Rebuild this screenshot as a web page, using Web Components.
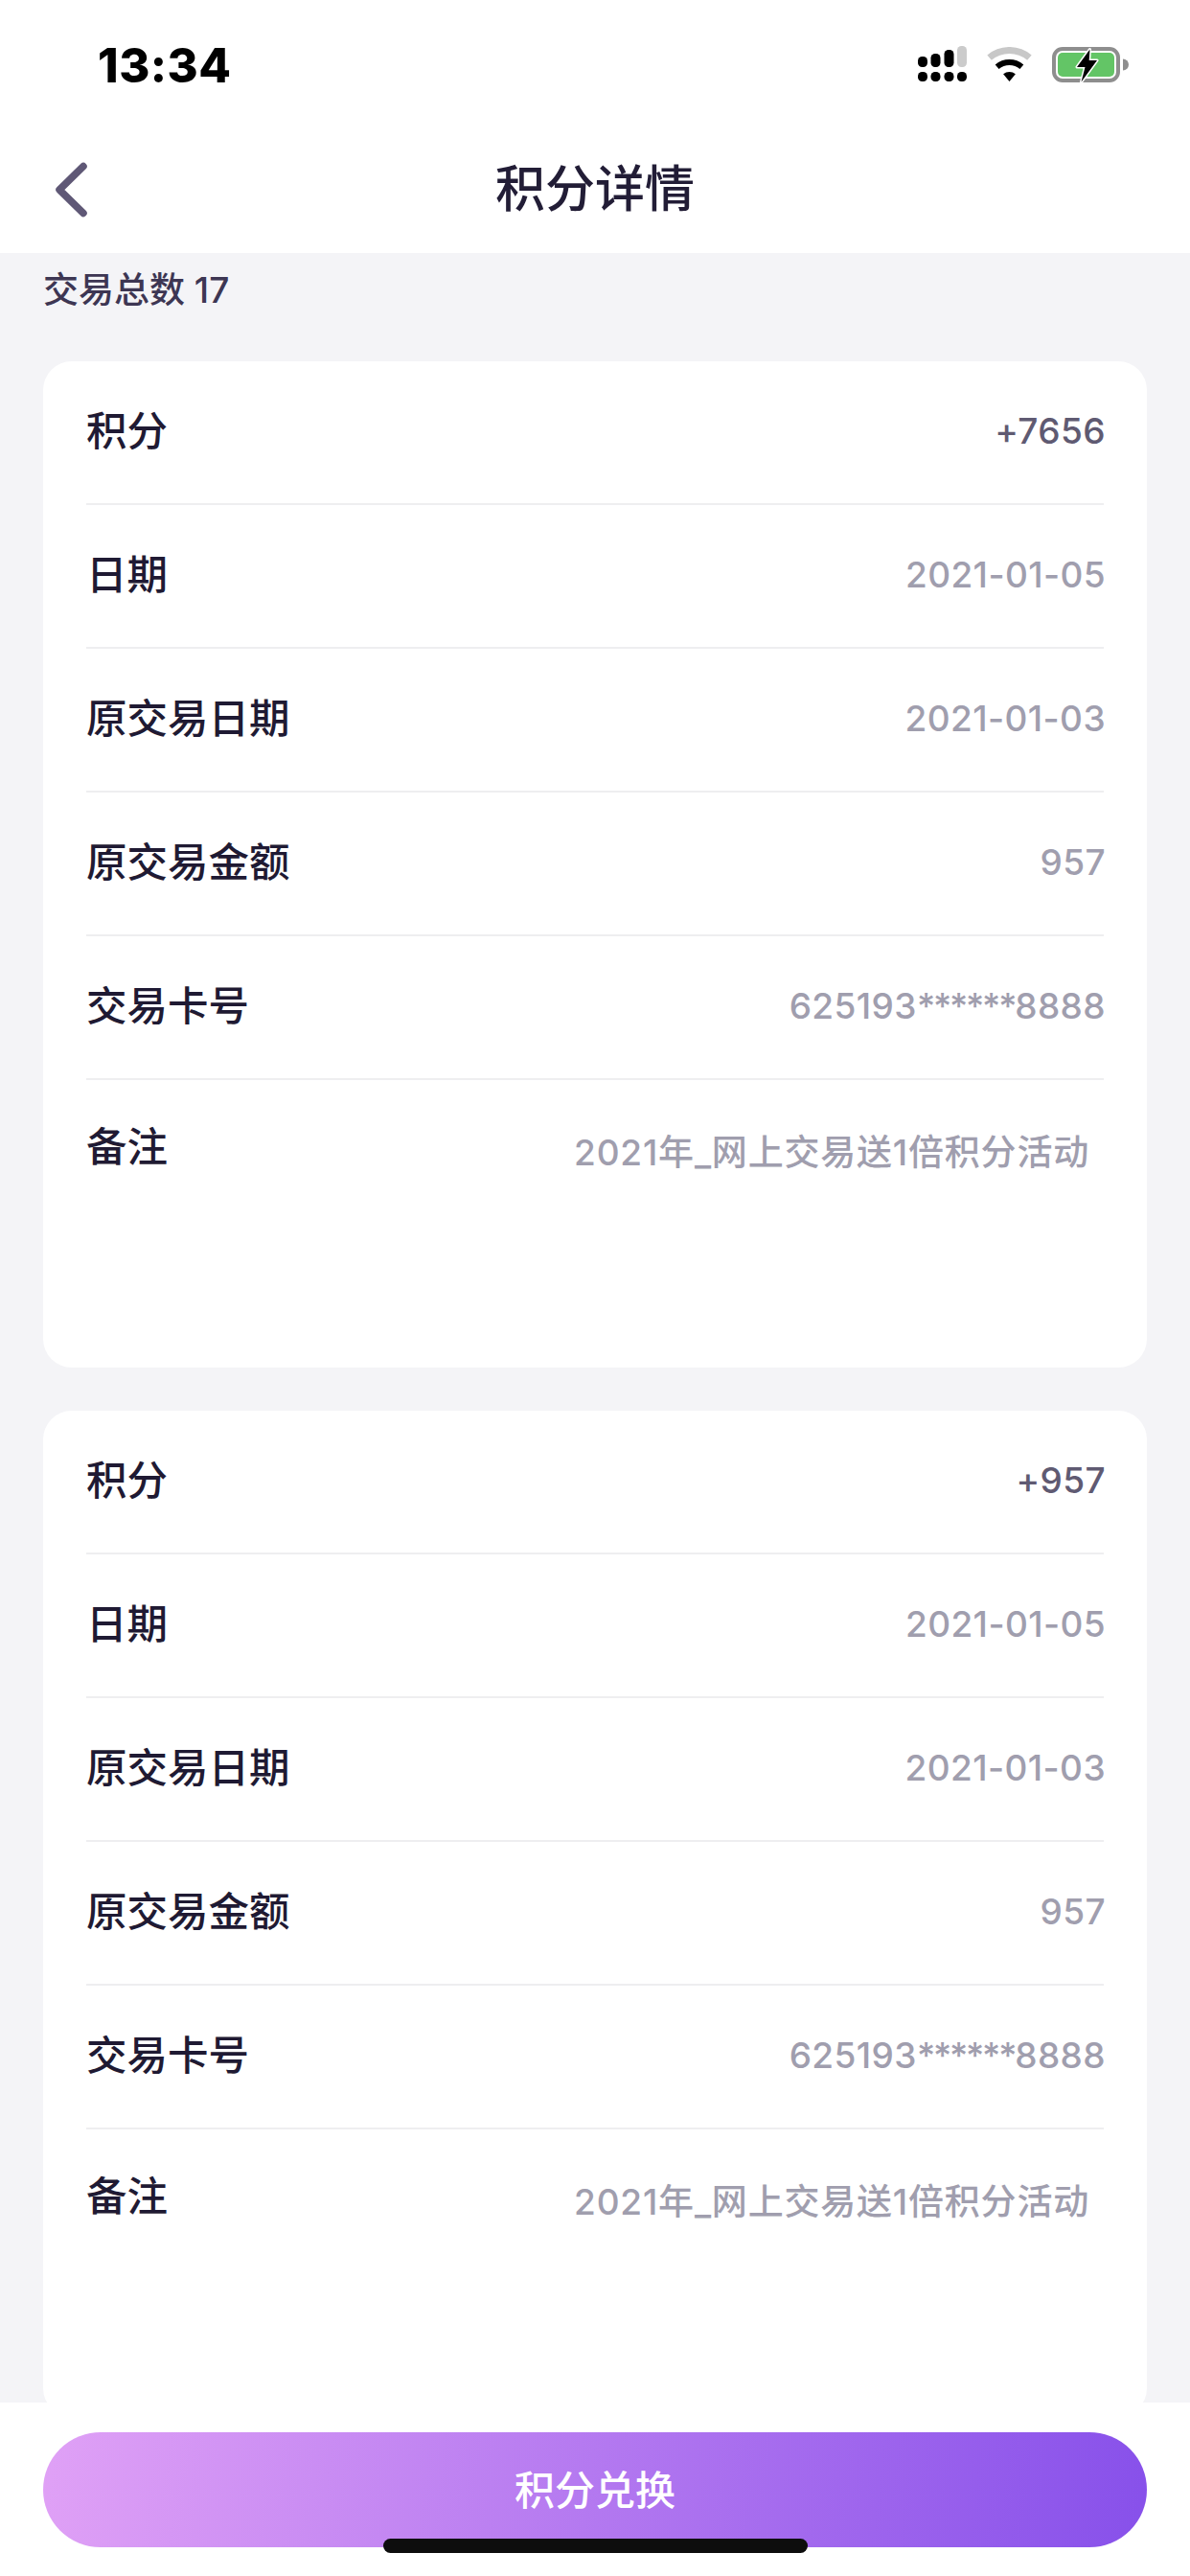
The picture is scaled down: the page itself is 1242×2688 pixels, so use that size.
<!DOCTYPE html>
<html lang="zh">
<head>
<meta charset="utf-8">
<title>积分详情</title>
<style>
    html, body {
        margin: 0;
        padding: 0;
        background: #f4f4f7;
    }
    body {
        font-family: Inter, 'Noto Sans CJK SC', sans-serif;
    }
</style>
</head>
<body>
<x-points-page>
    <x-status-bar slot="top" time="13:34"></x-status-bar>
    <x-nav-bar slot="top" title="积分详情"></x-nav-bar>

    <x-total-line>交易总数 17</x-total-line>

    <x-detail-card>
        <x-detail-row label="积分" value="+7656" strong></x-detail-row>
        <x-detail-row label="日期" value="2021-01-05"></x-detail-row>
        <x-detail-row label="原交易日期" value="2021-01-03"></x-detail-row>
        <x-detail-row label="原交易金额" value="957"></x-detail-row>
        <x-detail-row label="交易卡号" value="625193<i>******</i>8888"></x-detail-row>
        <x-detail-row label="备注" value="2021年_网上交易送1倍积分活动" note></x-detail-row>
    </x-detail-card>

    <x-detail-card>
        <x-detail-row label="积分" value="+957" strong></x-detail-row>
        <x-detail-row label="日期" value="2021-01-05"></x-detail-row>
        <x-detail-row label="原交易日期" value="2021-01-03"></x-detail-row>
        <x-detail-row label="原交易金额" value="957"></x-detail-row>
        <x-detail-row label="交易卡号" value="625193<i>******</i>8888"></x-detail-row>
        <x-detail-row label="备注" value="2021年_网上交易送1倍积分活动" note></x-detail-row>
    </x-detail-card>

    <x-bottom-bar slot="overlay">积分兑换</x-bottom-bar>
</x-points-page>

<script>
'use strict';

class PointsPage extends HTMLElement {
    constructor() {
        super();
        this.attachShadow({mode: 'open'}).innerHTML = /*html*/`
            <style>
            :host {
                display: block;
                position: relative;
                height: 2688px;
                overflow: hidden;
                background: #f4f4f7;
            }
            .top {
                background: #fff;
            }
            .content {
                display: flex;
                flex-direction: column;
                gap: 45px;
                padding: 0 45px;
            }
            </style>
            <div class="top"><slot name="top"></slot></div>
            <div class="content"><slot></slot></div>
            <slot name="overlay"></slot>
        `;
    }
}

class StatusBar extends HTMLElement {
    constructor() {
        super();
        this.attachShadow({mode: 'open'}).innerHTML = /*html*/`
            <style>
            :host {
                display: flex;
                align-items: center;
                justify-content: space-between;
                box-sizing: border-box;
                height: 132px;
                padding: 4px 64px 0 102px;
            }
            .time {
                font: 800 49px/1 Inter, sans-serif;
                letter-spacing: .5px;
                color: #000;
            }
            .icons {
                display: flex;
                align-items: center;
                gap: 21px;
                margin-top: -2px;
            }
            svg {
                display: block;
            }
            </style>
            <div class="time js-time"></div>
            <div class="icons">
                <svg width="51" height="38" viewBox="0 0 51 38">
                    <g fill="#000">
                        <rect x="0" y="11" width="10" height="11" rx="4.5"/>
                        <rect x="13.5" y="8" width="10" height="14" rx="4.5"/>
                        <rect x="27.5" y="4" width="10" height="18" rx="4.5"/>
                        <rect x="0" y="27" width="10" height="10" rx="4.5"/>
                        <rect x="13.5" y="27" width="10" height="10" rx="4.5"/>
                        <rect x="27.5" y="27" width="10" height="10" rx="4.5"/>
                        <rect x="41" y="27" width="10" height="10" rx="4.5"/>
                    </g>
                    <rect x="41" y="0" width="10" height="22" rx="4.5" fill="#cbcbcb"/>
                </svg>
                <svg width="47" height="36" viewBox="0 0 47 36">
                    <path d="M2.6 11.1A32.5 32.5 0 0 1 44.4 11.1" fill="none" stroke="#c8c8c8" stroke-width="7"/>
                    <path d="M10.64 20.68A20 20 0 0 1 36.36 20.68" fill="none" stroke="#000" stroke-width="6"/>
                    <path d="M23.5 36L17.1 28.34A10 10 0 0 1 29.9 28.34Z" fill="#000"/>
                </svg>
                <svg width="80" height="39" viewBox="0 0 80 39">
                    <rect x="2" y="3" width="67" height="33" rx="9" fill="none" stroke="#8e8e8e" stroke-width="4"/>
                    <rect x="6" y="7" width="59" height="25" rx="5" fill="#63c566"/>
                    <path d="M74 13.5a6 6 0 0 1 0 12Z" fill="#8e8e8e"/>
                    <path d="M39.5 3.5L26 22H34.5L30.5 37.5L47 15H38.7Z" fill="#000" stroke="#fff" stroke-width="3" stroke-linejoin="round" paint-order="stroke"/>
                </svg>
            </div>
        `;
        this.shadowRoot.querySelector('.js-time').textContent = this.getAttribute('time');
    }
}

class NavBar extends HTMLElement {
    constructor() {
        super();
        this.attachShadow({mode: 'open'}).innerHTML = /*html*/`
            <style>
            :host {
                display: flex;
                align-items: center;
                justify-content: center;
                position: relative;
                height: 132px;
            }
            .back {
                position: absolute;
                left: 54px;
                top: 33px;
            }
            .title {
                font-size: 52px;
                font-weight: 500;
                line-height: 70px;
                color: #221d36;
            }
            </style>
            <svg class="back" width="42" height="66" viewBox="0 0 42 66">
                <path d="M33 8.5L8 33L33 57.5" fill="none" stroke="#5f5876" stroke-width="7.5" stroke-linecap="round" stroke-linejoin="round"/>
            </svg>
            <div class="title js-title"></div>
        `;
        this.shadowRoot.querySelector('.js-title').textContent = this.getAttribute('title');
    }
}

class TotalLine extends HTMLElement {
    constructor() {
        super();
        this.attachShadow({mode: 'open'}).innerHTML = /*html*/`
            <style>
            :host {
                display: block;
                height: 68px;
                font-size: 37px;
                font-weight: 500;
                line-height: 78px;
                color: #3d3653;
            }
            </style>
            <slot></slot>
        `;
    }
}

class DetailCard extends HTMLElement {
    constructor() {
        super();
        this.attachShadow({mode: 'open'}).innerHTML = /*html*/`
            <style>
            :host {
                display: block;
                padding: 0 45px;
                border-radius: 30px;
                background: #fff;
            }
            </style>
            <slot></slot>
        `;
    }
}

class DetailRow extends HTMLElement {
    constructor() {
        super();
        this.attachShadow({mode: 'open'}).innerHTML = /*html*/`
            <style>
            :host {
                display: flex;
                align-items: center;
                justify-content: space-between;
                box-sizing: border-box;
                height: 150px;
                border-bottom: 2px solid #eeeef0;
            }
            :host([note]) {
                align-items: flex-start;
                height: 300px;
                border-bottom: 0;
                padding-top: 42px;
            }
            .label {
                font-size: 42.5px;
                font-weight: 500;
                line-height: 56px;
                margin-top: -2px;
                color: #1f1a33;
            }
            :host([note]) .label {
                margin-top: 0;
            }
            .value {
                font-size: 37px;
                font-weight: 550;
                line-height: 50px;
                letter-spacing: .4px;
                margin: -3px -2px 0 0;
                color: #a09eae;
            }
            .value i {
                font-style: normal;
                letter-spacing: -2.2px;
            }
            :host([strong]) .value {
                color: #5f5a72;
            }
            :host([note]) .value {
                margin: 9px 15px 0 0;
                letter-spacing: .8px;
            }
            </style>
            <div class="label js-label"></div>
            <div class="value js-value"></div>
        `;
        this.shadowRoot.querySelector('.js-label').textContent = this.getAttribute('label');
        // the card number keeps its <i> so the masked digits can sit tighter
        this.shadowRoot.querySelector('.js-value').innerHTML = this.getAttribute('value');
    }
}

class BottomBar extends HTMLElement {
    constructor() {
        super();
        this.attachShadow({mode: 'open'}).innerHTML = /*html*/`
            <style>
            :host {
                display: block;
                position: absolute;
                left: 0;
                right: 0;
                bottom: 0;
                box-sizing: border-box;
                height: 181px;
                padding: 31px 45px 0;
                background: #fff;
            }
            .button {
                display: flex;
                align-items: center;
                justify-content: center;
                box-sizing: border-box;
                height: 120px;
                padding-bottom: 5px;
                border-radius: 60px;
                background: linear-gradient(97deg, #e0a1f6, #8750ea);
                font-size: 42px;
                font-weight: 500;
                color: #fff;
            }
            .home {
                position: absolute;
                left: 400px;
                bottom: 24px;
                width: 443px;
                height: 15px;
                border-radius: 8px;
                background: #0d0d0d;
            }
            </style>
            <div class="button"><slot></slot></div>
            <div class="home"></div>
        `;
    }
}

customElements.define('x-points-page', PointsPage);
customElements.define('x-status-bar', StatusBar);
customElements.define('x-nav-bar', NavBar);
customElements.define('x-total-line', TotalLine);
customElements.define('x-detail-card', DetailCard);
customElements.define('x-detail-row', DetailRow);
customElements.define('x-bottom-bar', BottomBar);
</script>
</body>
</html>
